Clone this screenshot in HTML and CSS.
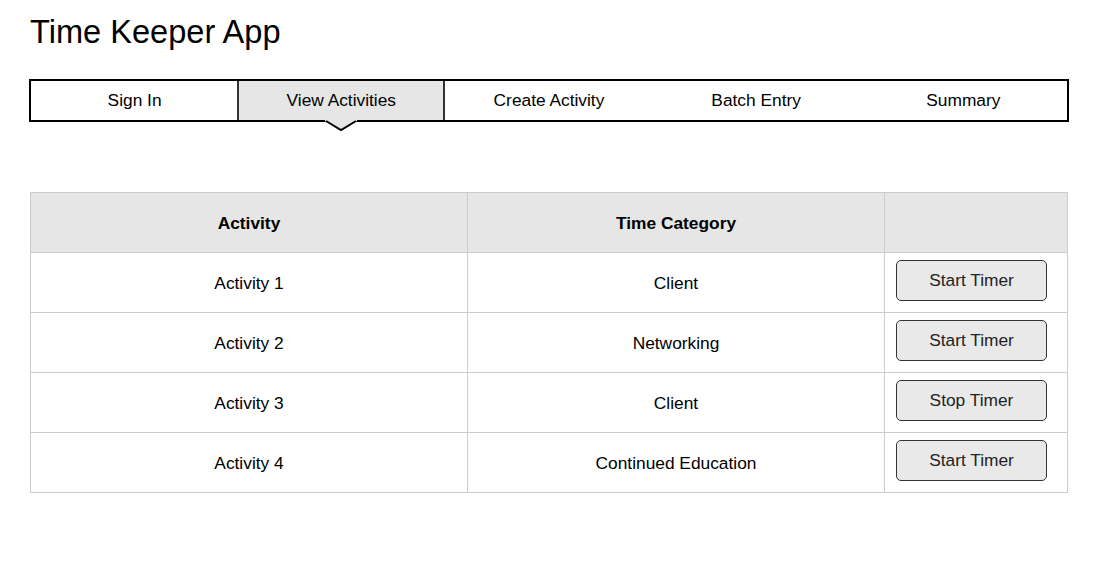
FILE: index.html
```html
<!DOCTYPE html>
<html>
<head>
<meta charset="utf-8">
<title>Time Keeper App</title>
<link rel="stylesheet" href="styles.css">
</head>
<body>
<div class="page">
  <h1 class="title">Time Keeper App</h1>
  <nav class="tabs">
    <div class="tab">Sign In</div>
    <div class="tab active">View Activities
      <svg class="pointer" width="32" height="12" viewBox="0 0 32 12"><polygon points="0,0 32,0 32,1 16,10 0,1" fill="#e6e6e6"/><polyline points="1,1 16,10 31,1" fill="none" stroke="#000" stroke-width="2"/></svg>
    </div>
    <div class="tab">Create Activity</div>
    <div class="tab">Batch Entry</div>
    <div class="tab">Summary</div>
  </nav>
  <table class="grid">
    <thead>
      <tr><th class="c1">Activity</th><th class="c2">Time Category</th><th class="c3"></th></tr>
    </thead>
    <tbody>
      <tr><td>Activity 1</td><td>Client</td><td class="act"><button class="btn">Start Timer</button></td></tr>
      <tr><td>Activity 2</td><td>Networking</td><td class="act"><button class="btn">Start Timer</button></td></tr>
      <tr><td>Activity 3</td><td>Client</td><td class="act"><button class="btn">Stop Timer</button></td></tr>
      <tr><td>Activity 4</td><td>Continued Education</td><td class="act"><button class="btn">Start Timer</button></td></tr>
    </tbody>
  </table>
</div>
</body>
</html>
```
FILE: styles.css
```css
* { box-sizing: border-box; }
html, body { margin: 0; padding: 0; background: #fff; }
body { font-family: "Liberation Sans", Arial, sans-serif; color: #000; }
.page { padding: 16px 0 0 29px; width: 1108px; }
.title { margin: 0; font-size: 32.6px; line-height: 32px; font-weight: normal; padding-left: 1px; }
.tabs {
  margin-top: 31px;
  width: 1040px;
  height: 43px;
  border: 2px solid #000;
  display: flex;
}
.tab {
  flex: none;
  width: 20%;
  display: flex;
  align-items: center;
  justify-content: center;
  font-size: 17.33px;
  position: relative;
}
.tab.active {
  margin-left: -1px;
  width: calc(20% + 1px);
  background: #e6e6e6;
  border-left: 2px solid #333;
  border-right: 2px solid #333;
}
.pointer {
  position: absolute;
  top: 100%;
  left: calc(50% - 16px);
  display: block;
}
.grid {
  margin-top: 70px;
  margin-left: 1px;
  width: 1038px;
  border-collapse: collapse;
  font-size: 17.33px;
}
.grid th, .grid td {
  border: 1px solid #cccccc;
  height: 60px;
  text-align: center;
  vertical-align: middle;
  padding: 2px 0 0 0;
}
.grid th { background: #e6e6e6; font-weight: bold; }
.c1 { width: 437px; }
.c2 { width: 417px; }
.grid td.act { text-align: left; vertical-align: top; padding: 7px 0 0 11px; }
.btn {
  display: block;
  width: 151px;
  height: 41px;
  border: 1px solid #333;
  border-radius: 5px;
  background: #e9e9e9;
  font-family: "Liberation Sans", Arial, sans-serif;
  font-size: 17.33px;
  color: #222;
  padding: 0 0 1px 0;
}
```
